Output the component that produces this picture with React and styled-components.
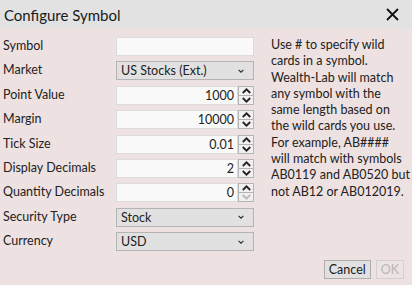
import React from "react";
import styled, { createGlobalStyle } from "styled-components";

const Global = createGlobalStyle`
  html, body { margin: 0; padding: 0; background: #eee1e1; }
  body { font-family: "Lato", "Noto Sans", sans-serif; }
`;

const Dialog = styled.div`
  width: 412px;
  height: 285px;
  display: flex;
  flex-direction: column;
  background: #eee1e1;
  color: #222;
  overflow: hidden;
`;

const TitleBar = styled.div`
  height: 29px;
  flex: none;
  display: flex;
  align-items: center;
  justify-content: space-between;
  background: #e2e2e2;
  padding: 0 13px 0 4px;
`;

const Title = styled.div`
  font-size: 15px;
  color: #1a1a1a;
`;

const Body = styled.div`
  flex: 1;
  display: flex;
  padding: 8px 0 0 3px;
  gap: 17px;
`;

const Form = styled.div`
  display: grid;
  grid-template-columns: 113px 138px;
  row-gap: 5.4px;
  align-content: start;
`;

const Label = styled.div`
  font-size: 12.5px;
  height: 19px;
  line-height: 17px;
  white-space: nowrap;
`;

const TextBox = styled.div`
  height: 19px;
  box-sizing: border-box;
  background: #f9f9f9;
  border: 1px solid #dcdcdc;
`;

const Combo = styled.div`
  height: 19px;
  box-sizing: border-box;
  background: #e1e1e1;
  border: 1px solid #b4b4b4;
  display: flex;
  align-items: center;
  justify-content: space-between;
  padding: 0 9px 0 4px;
  font-size: 12.5px;
`;

const Chevron = styled.svg`
  width: 6px;
  height: 4px;
  flex: none;
`;

const NumRow = styled.div`
  height: 19px;
  display: flex;
`;

const NumBox = styled.div`
  flex: 1;
  box-sizing: border-box;
  background: #f9f9f9;
  border: 1px solid #dcdcdc;
  font-size: 12.5px;
  text-align: right;
  padding-right: 3px;
  line-height: 17px;
`;

const Spinner = styled.div`
  width: 16px;
  flex: none;
  box-sizing: border-box;
  border: 1px solid #b4b4b4;
  background: #f0f0f0;
  display: flex;
  flex-direction: column;
`;

const SpinHalf = styled.div`
  flex: 1;
  display: flex;
  align-items: center;
  justify-content: center;
  & + & { border-top: 1px solid #b4b4b4; }
`;

const Help = styled.div`
  font-size: 12.5px;
  line-height: 16.3px;
`;

const HelpLine = styled.div`
  white-space: nowrap;
`;

const Footer = styled.div`
  display: flex;
  justify-content: flex-end;
  gap: 5px;
  padding: 0 8px 6px 0;
`;

const Button = styled.div`
  height: 19px;
  box-sizing: border-box;
  padding: 0 4px;
  display: flex;
  align-items: center;
  justify-content: center;
  font-size: 12.5px;
  border: 1px solid ${(p) => (p.disabled ? "#d6cfcf" : "#adadad")};
  background: ${(p) => (p.disabled ? "#ece4e4" : "#e1e1e1")};
  color: ${(p) => (p.disabled ? "#bdb6b6" : "#1a1a1a")};
  min-width: ${(p) => (p.disabled ? "25px" : "44px")};
`;

const Arrow = ({ up, disabled }) => (
  <svg width="9" height="6" viewBox="0 0 9 6">
    <path
      d={up ? "M0.8 5 L4.5 1.3 L8.2 5" : "M0.8 1 L4.5 4.7 L8.2 1"}
      fill="none"
      stroke={disabled ? "#b9b9b9" : "#222"}
      strokeWidth="1.8"
    />
  </svg>
);

const Dropdown = ({ value }) => (
  <Combo>
    <span>{value}</span>
    <Chevron viewBox="0 0 6 4">
      <path d="M0.6 0.8 L3 3.2 L5.4 0.8" fill="none" stroke="#333" strokeWidth="1.2" />
    </Chevron>
  </Combo>
);

const Numeric = ({ value, downDisabled }) => (
  <NumRow>
    <NumBox>{value}</NumBox>
    <Spinner>
      <SpinHalf><Arrow up /></SpinHalf>
      <SpinHalf><Arrow disabled={downDisabled} /></SpinHalf>
    </Spinner>
  </NumRow>
);

const helpLines = [
  "Use # to specify wild",
  "cards in a symbol.",
  "Wealth-Lab will match",
  "any symbol with the",
  "same length based on",
  "the wild cards you use.",
  "For example, AB####",
  "will match with symbols",
  "AB0119 and AB0520 but",
  "not AB12 or AB012019.",
];

export default function App() {
  return (
    <Dialog>
      <Global />
      <TitleBar>
        <Title>Configure Symbol</Title>
        <svg width="13" height="13" viewBox="0 0 13 13">
          <path d="M1 1 L12 12 M12 1 L1 12" stroke="#111" strokeWidth="1.8" />
        </svg>
      </TitleBar>
      <Body>
        <Form>
          <Label>Symbol</Label>
          <TextBox />
          <Label>Market</Label>
          <Dropdown value="US Stocks (Ext.)" />
          <Label>Point Value</Label>
          <Numeric value="1000" />
          <Label>Margin</Label>
          <Numeric value="10000" />
          <Label>Tick Size</Label>
          <Numeric value="0.01" />
          <Label>Display Decimals</Label>
          <Numeric value="2" />
          <Label>Quantity Decimals</Label>
          <Numeric value="0" downDisabled />
          <Label>Security Type</Label>
          <Dropdown value="Stock" />
          <Label>Currency</Label>
          <Dropdown value="USD" />
        </Form>
        <Help>
          {helpLines.map((l) => (
            <HelpLine key={l}>{l}</HelpLine>
          ))}
        </Help>
      </Body>
      <Footer>
        <Button>Cancel</Button>
        <Button disabled>OK</Button>
      </Footer>
    </Dialog>
  );
}
